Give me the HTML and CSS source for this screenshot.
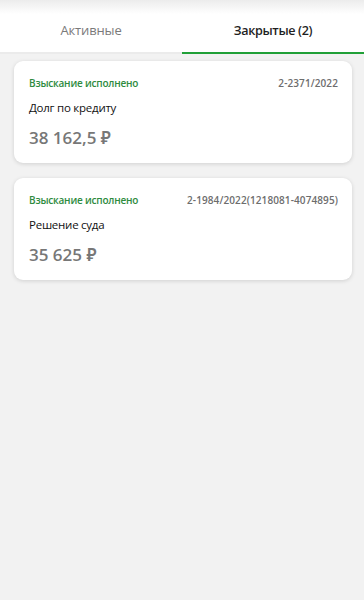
FILE: index.html
```html
<!DOCTYPE html>
<html lang="ru">
<head>
<meta charset="utf-8">
<link rel="stylesheet" href="styles.css">
</head>
<body>
<div class="tabs">
  <div class="tab">Активные</div>
  <div class="tab active">Закрытые (2)</div>
</div>
<div class="list">
  <div class="card">
    <div class="row">
      <span class="status">Взыскание исполнено</span>
      <span class="num">2-2371/2022</span>
    </div>
    <div class="title">Долг по кредиту</div>
    <div class="amount">38 162,5 ₽</div>
  </div>
  <div class="card">
    <div class="row">
      <span class="status">Взыскание исполнено</span>
      <span class="num">2-1984/2022(1218081-4074895)</span>
    </div>
    <div class="title">Решение суда</div>
    <div class="amount">35 625 ₽</div>
  </div>
</div>
</body>
</html>
```
FILE: styles.css
```css
* { box-sizing: border-box; }
html, body { margin: 0; padding: 0; }
body {
  background: #f2f2f2;
  font-family: "Open Sans", "Noto Sans", sans-serif;
  width: 364px;
  height: 600px;
  overflow: hidden;
}
.tabs {
  display: flex;
  height: 54px;
  background: linear-gradient(#ececec 0px, #ffffff 14px);
  border-bottom: 2px solid #ebebeb;
}
.tab {
  flex: 1;
  display: flex;
  align-items: center;
  justify-content: center;
  padding-top: 8px;
  font-size: 13px;
  letter-spacing: -0.15px;
  color: #7a7a7a;
  margin-bottom: -2px;
  border-bottom: 2px solid transparent;
}
.tab.active {
  color: #1f1f1f;
  font-weight: 600;
  font-size: 12.6px;
  letter-spacing: -0.35px;
  border-bottom-color: #21a038;
}
.list {
  display: flex;
  flex-direction: column;
  gap: 15px;
  padding: 7px 12px 0 14px;
}
.card {
  background: #fff;
  border-radius: 9px;
  box-shadow: 0 1px 4px rgba(0,0,0,0.14);
  padding: 15px 14px 12px 15px;
  height: 102px;
}
.row {
  display: flex;
  justify-content: space-between;
  align-items: baseline;
  font-size: 10px;
  font-weight: 600;
  line-height: 14px;
}
.status { color: #2e8b3e; letter-spacing: -0.2px; }
.num { color: #6d6d6d; font-weight: 600; letter-spacing: 0.1px; }
.title {
  margin-top: 10px;
  font-size: 11.5px;
  letter-spacing: -0.25px;
  color: #111;
  line-height: 16px;
}
.amount {
  margin-top: 11px;
  font-size: 17px;
  font-weight: 600;
  color: #777;
  line-height: 22px;
}
```
